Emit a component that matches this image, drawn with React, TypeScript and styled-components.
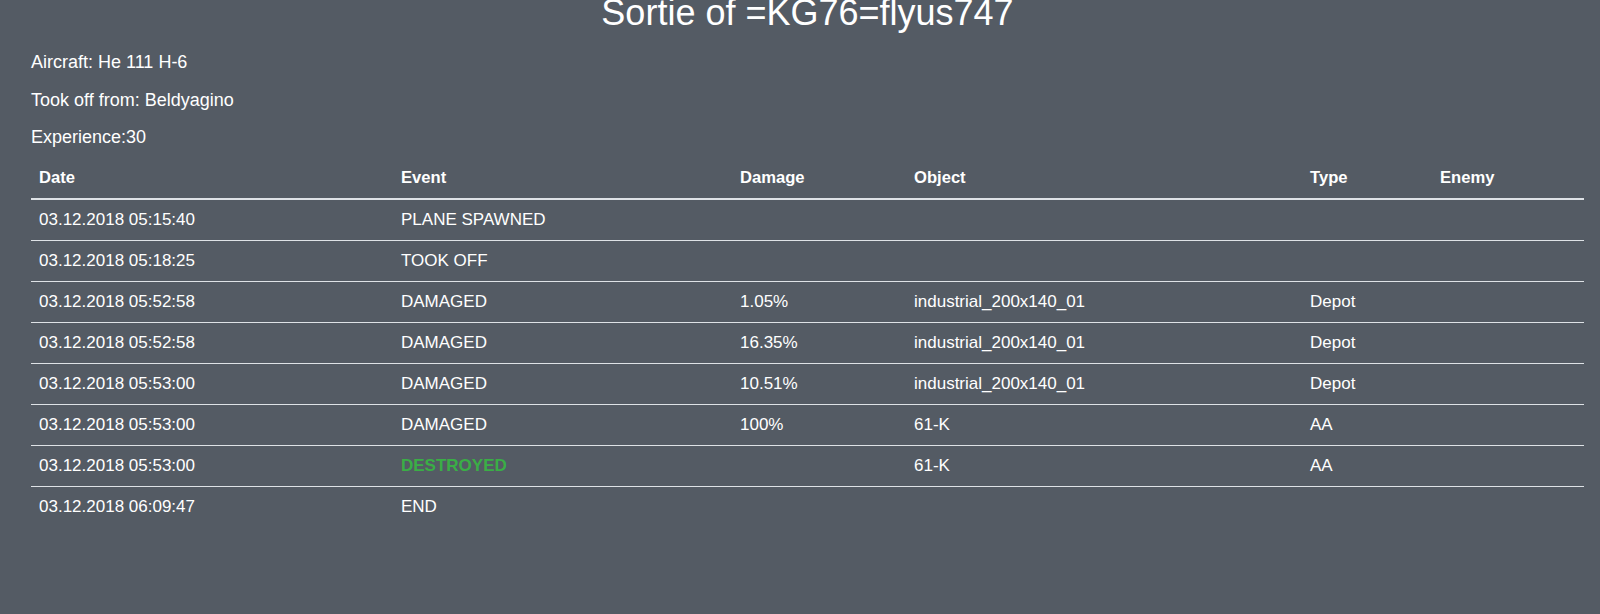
import React from 'react';
import styled, { createGlobalStyle } from 'styled-components';

const GlobalStyle = createGlobalStyle`
  html, body {
    margin: 0;
    padding: 0;
    background: #545b64;
  }
  body {
    font-family: "Liberation Sans", Arial, Helvetica, sans-serif;
    color: #ffffff;
  }
`;

interface SortieEvent {
  date: string;
  event: string;
  damage?: string;
  object?: string;
  type?: string;
  enemy?: string;
}

const events: SortieEvent[] = [
  { date: '03.12.2018 05:15:40', event: 'PLANE SPAWNED' },
  { date: '03.12.2018 05:18:25', event: 'TOOK OFF' },
  { date: '03.12.2018 05:52:58', event: 'DAMAGED', damage: '1.05%', object: 'industrial_200x140_01', type: 'Depot' },
  { date: '03.12.2018 05:52:58', event: 'DAMAGED', damage: '16.35%', object: 'industrial_200x140_01', type: 'Depot' },
  { date: '03.12.2018 05:53:00', event: 'DAMAGED', damage: '10.51%', object: 'industrial_200x140_01', type: 'Depot' },
  { date: '03.12.2018 05:53:00', event: 'DAMAGED', damage: '100%', object: '61-K', type: 'AA' },
  { date: '03.12.2018 05:53:00', event: 'DESTROYED', object: '61-K', type: 'AA' },
  { date: '03.12.2018 06:09:47', event: 'END' },
];

const columns = [
  { label: 'Date', width: 362 },
  { label: 'Event', width: 339 },
  { label: 'Damage', width: 174 },
  { label: 'Object', width: 396 },
  { label: 'Type', width: 130 },
  { label: 'Enemy', width: 152 },
];

const Page = styled.main`
  padding: 0 16px 40px 31px;
`;

const Title = styled.h1`
  margin: -5px 0 0;
  font-size: 36px;
  line-height: 36px;
  font-weight: 400;
  text-align: center;
`;

const Info = styled.div`
  display: flex;
  flex-direction: column;
  gap: 16px;
  margin-top: 21px;
`;

const InfoLine = styled.p`
  margin: 0;
  font-size: 18px;
  line-height: 21.5px;
`;

const Table = styled.table`
  width: 100%;
  margin-top: 7px;
  border-collapse: collapse;
  table-layout: fixed;
`;

const Th = styled.th`
  padding: 11px 8px 10px;
  font-size: 16.6px;
  line-height: 21px;
  font-weight: 700;
  text-align: left;
  border-bottom: 2px solid #dee2e6;
`;

const Row = styled.tr`
  & + & td {
    border-top: 1px solid #dee2e6;
  }
`;

const Td = styled.td<{ $destroyed?: boolean }>`
  padding: 9px 8px 10px;
  font-size: 17px;
  line-height: 21px;
  white-space: nowrap;
  color: ${p => (p.$destroyed ? '#3aae46' : '#ffffff')};
  font-weight: ${p => (p.$destroyed ? 700 : 400)};
`;

export default function App() {
  return (
    <Page>
      <GlobalStyle />
      <Title>Sortie of =KG76=flyus747</Title>
      <Info>
        <InfoLine>Aircraft: He 111 H-6</InfoLine>
        <InfoLine>Took off from: Beldyagino</InfoLine>
        <InfoLine>Experience:30</InfoLine>
      </Info>
      <Table>
        <colgroup>
          {columns.map(c => (
            <col key={c.label} style={{ width: c.width }} />
          ))}
        </colgroup>
        <thead>
          <tr>
            {columns.map(c => (
              <Th key={c.label}>{c.label}</Th>
            ))}
          </tr>
        </thead>
        <tbody>
          {events.map((e, i) => (
            <Row key={i}>
              <Td>{e.date}</Td>
              <Td $destroyed={e.event === 'DESTROYED'}>{e.event}</Td>
              <Td>{e.damage}</Td>
              <Td>{e.object}</Td>
              <Td>{e.type}</Td>
              <Td>{e.enemy}</Td>
            </Row>
          ))}
        </tbody>
      </Table>
    </Page>
  );
}
